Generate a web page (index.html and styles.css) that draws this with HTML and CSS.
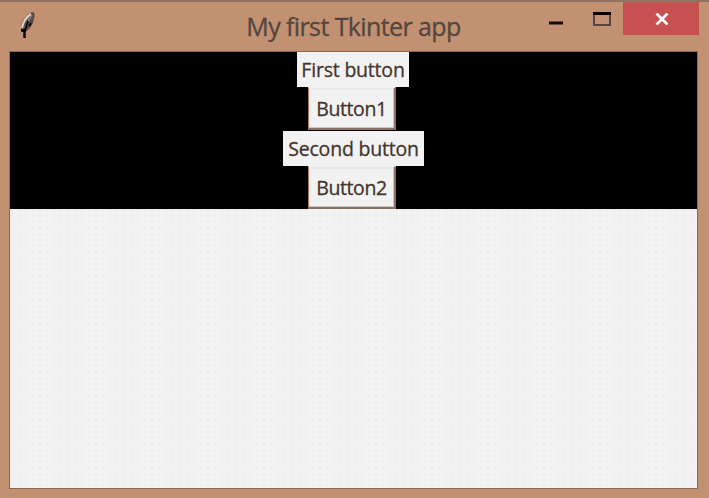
FILE: index.html
```html
<!DOCTYPE html>
<html lang="en">
<head>
<meta charset="utf-8">
<title>My first Tkinter app</title>
<link rel="stylesheet" href="styles.css">
</head>
<body>
<div class="window">
  <header class="titlebar">
    <svg class="feather" width="18" height="30" viewBox="0 0 18 30">
      <path d="M14 1C8 2 3 9 2 15c0 3 0 5 3 6 5-1 9-7 10-13 1-3 1-6-1-7z" fill="#5c4c46"/>
      <path d="M12 3C7 6 4 11 3 17" fill="none" stroke="#d8d0cc" stroke-width="2.2"/>
      <path d="M13 4C9 9 7 14 6 19" fill="none" stroke="#8b7d76" stroke-width="1.6"/>
      <path d="M9 10l-2 6M12 12l-2 3M8 15l-3 5" stroke="#000" stroke-width="1.6"/>
      <path d="M2 19.5h5M5.5 18v9" stroke="#000" stroke-width="2.4"/>
    </svg>
    <h1 class="title"><span>My first Tkinter app</span></h1>
    <div class="controls">
      <span class="control minimize"><svg width="14" height="4"><path d="M0 2h14" stroke="#100c0a" stroke-width="3"/></svg></span>
      <span class="control maximize"><svg width="18" height="14"><path d="M1 2v11h16V2" fill="none" stroke="#55463f" stroke-width="2"/><path d="M0 1.5h18" stroke="#000" stroke-width="3"/></svg></span>
      <span class="control close"><svg width="14" height="12"><path d="M1.5 .5l11 11M12.5 .5l-11 11" stroke="#fff" stroke-width="2.7"/></svg></span>
    </div>
  </header>
  <main class="client">
    <section class="frame">
      <div class="label first"><span>First button</span></div>
      <button class="button"><span>Button1</span></button>
      <div class="label second"><span>Second button</span></div>
      <button class="button last"><span>Button2</span></button>
    </section>
  </main>
</div>
</body>
</html>
```
FILE: styles.css
```css
* { box-sizing: border-box; }
body { margin: 0; font-family: "Open Sans", "Noto Sans", sans-serif; }
.window {
  width: 709px;
  height: 498px;
  padding: 0 11px 9px 9px;
  background: #c19171;
  border-top: 2px solid #947262;
  display: flex;
  flex-direction: column;
}
.titlebar {
  height: 49px;
  display: grid;
  grid-template-columns: 180px 1fr 180px;
  align-items: start;
}
.feather { margin: 9px 0 0 10px; }
.title {
  margin: 0;
  padding-top: 7px;
  font-size: 25px;
  line-height: 34px;
  font-weight: 400;
  letter-spacing: -0.6px;
  color: #54463f;
  -webkit-text-stroke: 0.3px #54463f;
  text-align: center;
  white-space: nowrap;
}
.controls { display: flex; justify-content: flex-end; margin-right: -1px; }
.control { display: flex; height: 33px; }
.minimize { width: 44px; padding-top: 19px; }
.maximize { width: 30px; padding-top: 10px; }
.close {
  width: 76px;
  background: #c75050;
  align-items: center;
  justify-content: center;
  padding-left: 2px;
}
.client {
  flex: 1;
  border: 1px solid #85695a;
  background: radial-gradient(circle at 2px 2px, #ebebeb 0.7px, transparent 1px) 0 0 / 7px 6px, #f2f2f2;
}
.frame {
  height: 157px;
  background: #000;
  display: flex;
  flex-direction: column;
  align-items: center;
}
.label, .button {
  font-family: inherit;
  font-size: 19.5px;
  font-weight: 400;
  line-height: 35px;
  color: #44352e;
  -webkit-text-stroke: 0.3px #44352e;
  background: #f2f2f2;
  text-align: center;
  white-space: nowrap;
  padding: 0;
}
.label { height: 35px; letter-spacing: -0.2px; }
.first { width: 112px; margin-right: 1px; }
.second { width: 141px; margin-top: 1px; }
.button {
  width: 88px;
  height: 43px;
  margin: 0 3px 0 0;
  border: 1px solid #a17a66;
  border-top-color: #f2f2f2;
  border-right: 2px solid #8c7160;
  border-bottom: 2px solid #8c7160;
  border-radius: 0;
  letter-spacing: -0.4px;
  box-shadow: inset -1px -1px #c8c8c8, inset 2px 2px #e9e9e9;
}
```
